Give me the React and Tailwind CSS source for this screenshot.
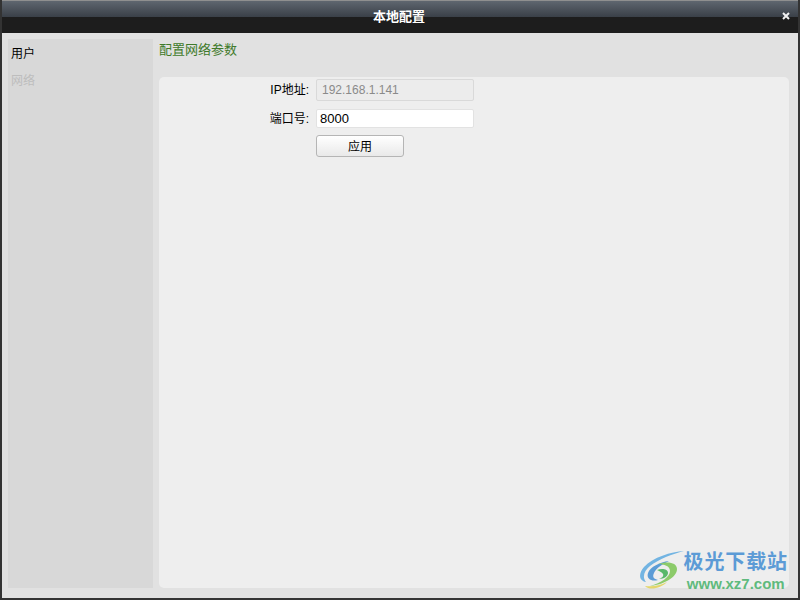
const font = { fontFamily: '"Liberation Sans", "Noto Sans CJK SC", sans-serif' };

function Watermark() {
  return (
    <div className="absolute right-[10px] bottom-[6px] flex items-center">
      <svg width="46" height="42" viewBox="0 0 46 42" className="mr-[-1px] mt-[4px]">
        <path d="M45 1C32 2 14 7 5 17c-6 7-5 14 2 15C3 27 5 21 11 16 20 9 33 4 45 1z" fill="#72b4e2" />
        <path d="M30 11C21 12 11 17 9 23c-2 6 4 9 10 7-4-1-6-3-4-7 2-5 9-9 15-12z" fill="#5b9cd6" />
        <path d="M19 14c9-3 19-2 19 5 0 9-15 16-27 17 11-3 20-9 20-15 0-5-6-7-12-7z" fill="#8ccb6a" />
        <path d="M18 20c5-2 11-1 11 3 0 3-4 6-9 6 3-1 5-3 4-5-1-2-4-3-6-4z" fill="#58b86a" />
        <path d="M6 36c7 1 14 0 22-4-6 6-17 9-22 4z" fill="#e3d66a" />
      </svg>
      <div className="flex flex-col items-center">
        <span className="text-[20px] leading-[29px] font-bold text-[#5c9bd6] tracking-[0.9px]" style={{ fontFamily: '"Noto Sans CJK SC", sans-serif' }}>极光下载站</span>
        <span className="text-[15px] leading-[17px] font-bold text-[#5fba7d]" style={font}>www.xz7.com</span>
      </div>
    </div>
  );
}

export default function App() {
  return (
    <div className="relative w-[800px] h-[600px] overflow-hidden flex flex-col bg-[#e1e1e1] border-x-2 border-b-2 border-[#333333]" style={font}>
      {/* title bar */}
      <div className="relative h-[33px] shrink-0 -mx-[2px] flex flex-col border-t border-[#8f8f8f]">
        <div className="h-[16px] bg-gradient-to-b from-[#5f666f] to-[#3a4048]" />
        <div className="flex-1 bg-[#1d1d1d]" />
        <div className="absolute inset-0 flex items-center justify-center pr-[2px] text-white text-[13px] font-bold">本地配置</div>
        <svg width="8" height="8" viewBox="0 0 8 8" className="absolute right-[10px] top-[11px]">
          <path d="M1 1l6 6M7 1L1 7" stroke="#f2f2f2" strokeWidth="2" />
        </svg>
      </div>

      <div className="flex-1 flex gap-[6px] pl-[6px] pr-[9px] pt-[6px] pb-[10px] min-h-0">
        {/* sidebar */}
        <div className="w-[145px] shrink-0 bg-[#d8d8d8] pl-[3px] pt-[8px] text-[12px] flex flex-col gap-[13px]">
          <div className="h-[14px] leading-[14px] text-black">用户</div>
          <div className="h-[14px] leading-[14px] text-[#bdbdbd]">网络</div>
        </div>

        {/* content */}
        <div className="flex-1 flex flex-col">
          <div className="h-[38px] shrink-0 pt-[3px] text-[13px] leading-[15px] text-[#3f7a2a]">配置网络参数</div>
          <div className="flex-1 bg-[#eeeeee] rounded-[5px] pt-[2px]">
            <div className="grid grid-cols-[150px_158px] gap-x-[7px] text-[12px] text-black items-center">
              <div className="h-[22px] flex items-center justify-end">IP地址:</div>
              <div className="h-[22px] px-[5px] flex items-center rounded-[2px] border border-[#d9d9d9] bg-[#ececec] text-[#8a8a8a]">192.168.1.141</div>
              <div className="mt-[8px] h-[19px] flex items-center justify-end">端口号:</div>
              <div className="mt-[8px] h-[19px] px-[3px] flex items-center rounded-[2px] border border-[#e2e2e2] bg-white text-[13px]">8000</div>
              <div />
              <button className="mt-[7px] w-[88px] h-[22px] pt-[1px] flex items-center justify-center rounded-[3px] border border-[#b5b5b5] bg-gradient-to-b from-white to-[#e9e9e9] text-black">应用</button>
            </div>
          </div>
        </div>
      </div>
      <Watermark />
    </div>
  );
}
